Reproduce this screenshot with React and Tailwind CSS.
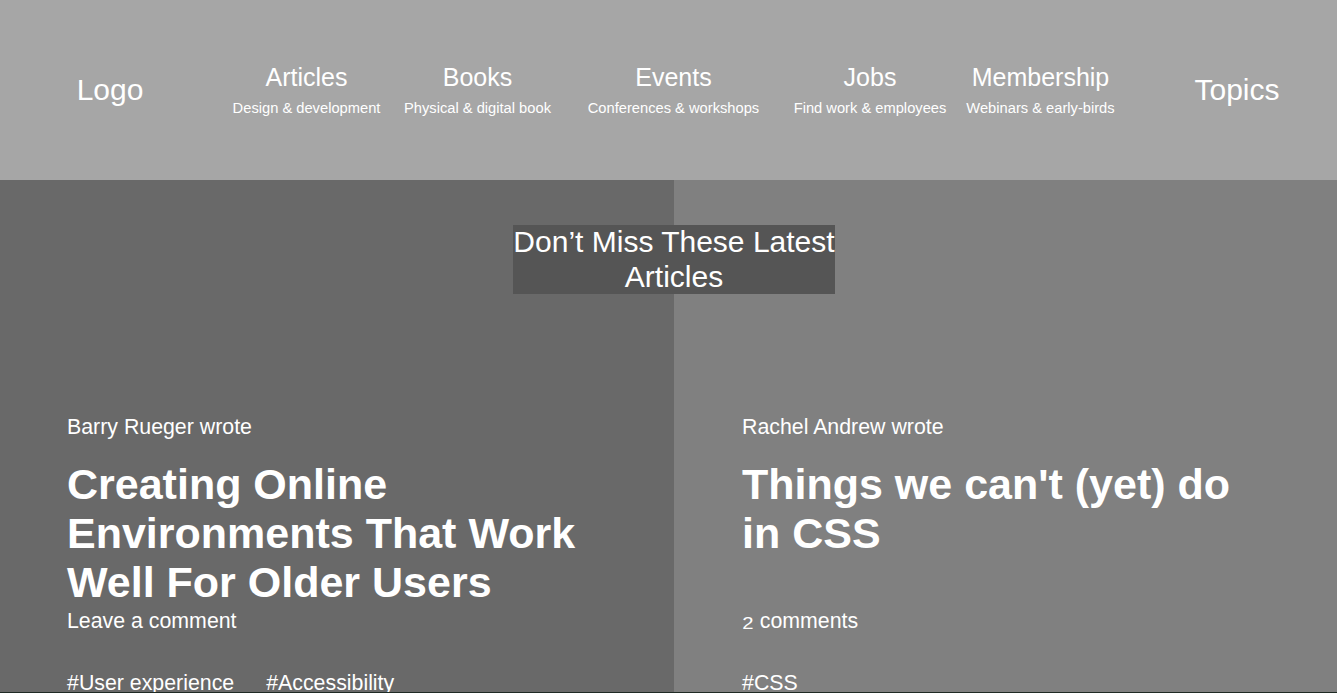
const navItems = [
  { title: 'Articles', sub: 'Design & development' },
  { title: 'Books', sub: 'Physical & digital book' },
  { title: 'Events', sub: 'Conferences & workshops' },
  { title: 'Jobs', sub: 'Find work & employees' },
  { title: 'Membership', sub: 'Webinars & early-birds' },
];

const posts = [
  {
    author: 'Barry Rueger',
    title: 'Creating Online Environments That Work Well For Older Users',
    comments: 'Leave a comment',
    tags: ['User experience', 'Accessibility'],
    bg: 'bg-[#696969]',
    pad: 'px-[67px]',
  },
  {
    author: 'Rachel Andrew',
    title: "Things we can't (yet) do in CSS",
    comments: (
      <>
        <span className="inline-block origin-bottom scale-y-[0.73] scale-x-[0.95]">2</span> comments
      </>
    ),
    tags: ['CSS'],
    bg: 'bg-[#808080]',
    pad: 'pl-[68px] pr-[66px]',
  },
];

function Header() {
  return (
    <header className="h-[180px] bg-[#a6a6a6] text-white grid grid-cols-[220px_173px_169px_223px_170px_171px_1fr] items-center text-center">
      <div className="text-[30px]">Logo</div>
      {navItems.map(item => (
        <a key={item.title} href="#" className="flex flex-col items-center gap-2">
          <span className="text-[25px]">{item.title}</span>
          <span className="text-[14.7px]">{item.sub}</span>
        </a>
      ))}
      <div className="text-[30px] pl-[11px]">Topics</div>
    </header>
  );
}

function Post({ post }) {
  return (
    <article className={`${post.bg} ${post.pad} pt-[235px] text-white text-[21.33px] overflow-hidden`}>
      <p>{post.author} wrote</p>
      <h3 className="mt-[20px] h-[149px] text-[43px] font-bold">{post.title}</h3>
      <p>{post.comments}</p>
      <div className="mt-[38px] flex gap-8">
        {post.tags.map(tag => (
          <a key={tag} href="#">#{tag}</a>
        ))}
      </div>
    </article>
  );
}

export default function App() {
  return (
    <div className="min-h-screen leading-[1.15] font-['Liberation_Sans',Arial,sans-serif]">
      <Header />
      <section className="relative h-[512px] grid grid-cols-[674px_1fr]">
        <h2 className="absolute left-[674px] top-[45px] -translate-x-1/2 w-[322px] bg-[#555555] text-white text-[30px] text-center">
          Don’t Miss These Latest Articles
        </h2>
        {posts.map(post => (
          <Post key={post.author} post={post} />
        ))}
      </section>
      <footer className="h-[40px] bg-[#1f2a24]" />
    </div>
  );
}
